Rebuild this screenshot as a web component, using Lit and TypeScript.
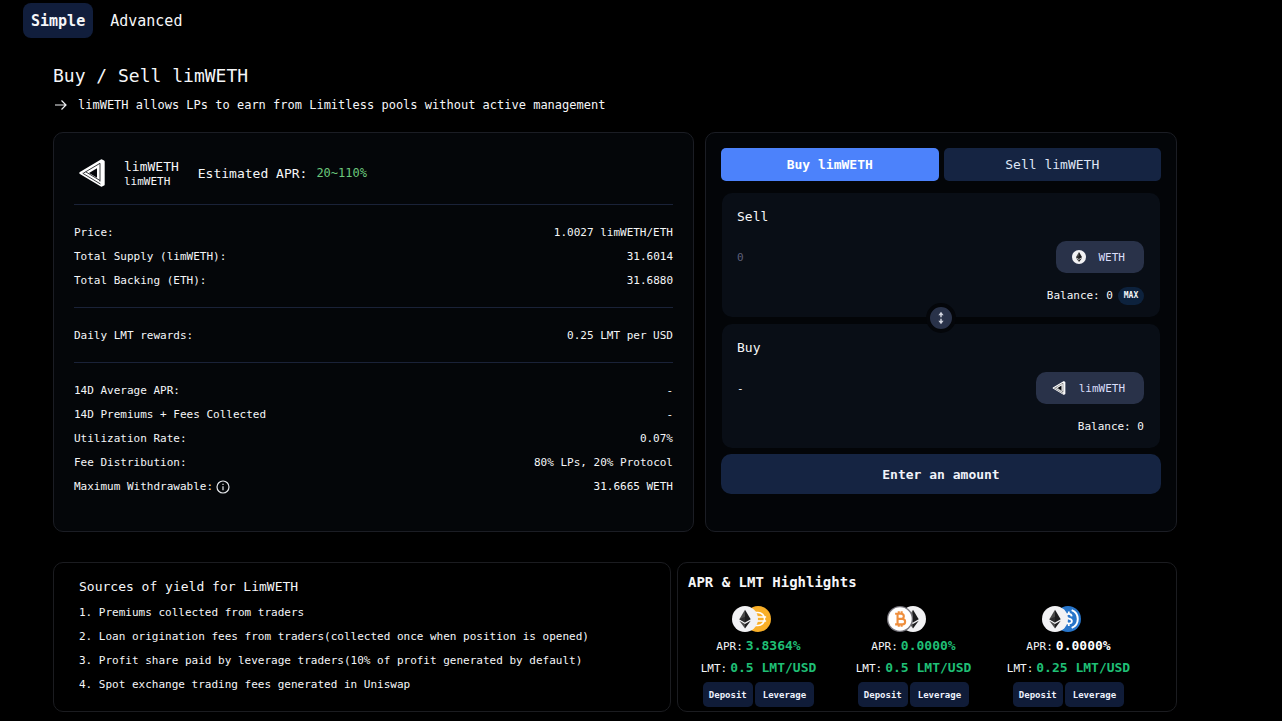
import { LitElement, html, svg, css, nothing } from "lit";
import { customElement, property, state } from "lit/decorators.js";
import { classMap } from "lit/directives/class-map.js";

const limitlessLogo = svg`
  <svg class="glyph" viewBox="0 0 26 28" aria-hidden="true">
    <path d="M1.500 14 22.500 1.500 24.500 2.500V25.500L22.500 26.500Z" fill="#fff" stroke="#fff" stroke-width="2.400" stroke-linejoin="round"/>
    <path d="M10 14 18 9.200v9.600Z" fill="#05070b"/>
    <path d="M21 22.500V4.300L4.300 14.200M6.800 12.900 21 21.500M3.600 14.200 21.500 25" fill="none" stroke="#05070b" stroke-width=".8"/>
  </svg>`;

const tokenArt: Record<string, unknown> = {
  eth: svg`
    <circle cx="16" cy="16" r="16" fill="#f2f2f4"/>
    <path d="M16 4.500 9 16.300l7 4.100Z" fill="#4a4a4a"/>
    <path d="M16 4.500 23 16.300l-7 4.100Z" fill="#1d1d1f"/>
    <path d="M9 16.300 16 13.100v7.300Z" fill="#2c2c2e"/>
    <path d="M9 18 16 27.600v-5.400Z" fill="#4a4a4a"/>
    <path d="M23 18 16 27.600v-5.400Z" fill="#1d1d1f"/>`,
  dai: svg`
    <circle cx="16" cy="16" r="16" fill="#f9af28"/>
    <path d="M10 8h6a8 8 0 0 1 0 16h-6ZM7 13.500h19M7 18.500h19" fill="none" stroke="#fff" stroke-width="2"/>`,
  btc: svg`
    <circle cx="16" cy="16" r="16" fill="#77757d"/>
    <circle cx="16" cy="16" r="14.400" fill="#fff"/>
    <path d="M10 9.500h7.500a3.200 3.200 0 0 1 0 6.400H12.500M12.500 16h6.500a3.300 3.300 0 0 1 0 6.600H10M13 10v12M14.500 6.500v3M18 6.500v3M14.500 22.500v3M18 22.500v3" fill="none" stroke="#ef8e3c" stroke-width="2.600"/>`,
  usdc: svg`
    <circle cx="16" cy="16" r="16" fill="#2775ca"/>
    <path d="M20.500 5a11.800 11.800 0 0 1 0 22M11.500 5a11.800 11.800 0 0 0 0 22" fill="none" stroke="#fff" stroke-width="2.400"/>
    <path d="M20.600 12.700c-.3-2-1.700-3-3.600-3-2.200 0-3.600 1.200-3.600 2.900 0 4 7.400 2 7.400 6 0 1.900-1.500 3-3.700 3-2.300 0-3.900-1.100-4.100-3.200M17 6.800v3M17 21.600v3" fill="none" stroke="#fff" stroke-width="2.200"/>`,
};

const tokenIcon = (name: string) => svg`
  <svg class="token" viewBox="0 0 32 32" aria-hidden="true">${tokenArt[name]}</svg>`;

interface Row {
  label: string;
  value: string;
  info?: boolean;
}

interface Pool {
  pair: [string, string];
  apr: string;
  lmt: string;
  plain?: boolean;
}

const base = css`
  *,
  *::before,
  *::after {
    box-sizing: border-box;
  }
  button,
  input {
    font: inherit;
    color: inherit;
    border: 0;
    padding: 0;
    margin: 0;
    background: none;
  }
  button {
    cursor: pointer;
  }
  h1,
  h2,
  h3,
  p,
  dl,
  dd,
  ol {
    margin: 0;
    padding: 0;
    font-weight: 400;
  }
  svg {
    display: block;
  }
`;

@customElement("vault-stats")
export class VaultStats extends LitElement {
  private groups: Row[][] = [
    [
      { label: "Price:", value: "1.0027 limWETH/ETH" },
      { label: "Total Supply (limWETH):", value: "31.6014" },
      { label: "Total Backing (ETH):", value: "31.6880" },
    ],
    [{ label: "Daily LMT rewards:", value: "0.25 LMT per USD" }],
    [
      { label: "14D Average APR:", value: "-" },
      { label: "14D Premiums + Fees Collected", value: "-" },
      { label: "Utilization Rate:", value: "0.07%" },
      { label: "Fee Distribution:", value: "80% LPs, 20% Protocol" },
      { label: "Maximum Withdrawable:", value: "31.6665 WETH", info: true },
    ],
  ];

  static styles = [
    base,
    css`
      :host {
        display: block;
        padding: 9px 20px 32px;
        background: #040609;
        border: 1px solid #1b1d24;
        border-radius: 10px;
      }
      .head {
        display: flex;
        align-items: center;
        height: 62px;
        padding-left: 5px;
      }
      .glyph {
        width: 26px;
        height: 28px;
      }
      .names {
        margin-left: 19px;
        padding-top: 2px;
        line-height: 15px;
      }
      .name {
        font-size: 13px;
      }
      .symbol {
        font-size: 11px;
      }
      .apr {
        margin-left: 19px;
        font-size: 13px;
      }
      .rate {
        margin-left: 9px;
        font-size: 12px;
        color: #6bc77c;
      }
      .group {
        padding: 16px 0 14px;
        border-top: 1px solid #1a2238;
        font-size: 11px;
        line-height: 24px;
      }
      .group:last-child {
        padding-bottom: 0;
      }
      .row {
        display: flex;
        justify-content: space-between;
      }
      .label {
        display: flex;
        align-items: center;
        gap: 3px;
      }
      .info {
        width: 14px;
        height: 14px;
      }
    `,
  ];

  render() {
    return html`
      <div class="head">
        ${limitlessLogo}
        <div class="names">
          <h2 class="name">limWETH</h2>
          <p class="symbol">limWETH</p>
        </div>
        <p class="apr">Estimated APR:</p>
        <p class="rate">20~110%</p>
      </div>
      ${this.groups.map(
        (rows) => html`<dl class="group">
          ${rows.map(
            (row) => html`<div class="row">
              <dt class="label">
                ${row.label}
                ${row.info
                  ? html`<svg class="info" viewBox="0 0 14 14" fill="none" stroke="#e4e6ea" stroke-width="1.2" aria-hidden="true">
                      <circle cx="7" cy="7" r="6" />
                      <path d="M7 6.300v4M7 3.700v1.300" />
                    </svg>`
                  : nothing}
              </dt>
              <dd>${row.value}</dd>
            </div>`
          )}
        </dl>`
      )}
    `;
  }
}

@customElement("trade-box")
export class TradeBox extends LitElement {
  @state() private side = "Buy";

  static styles = [
    base,
    css`
      :host {
        display: block;
        padding: 15px;
        background: #030508;
        border: 1px solid #1b1d24;
        border-radius: 10px;
      }
      .sides {
        display: grid;
        grid-template-columns: 1fr 1fr;
        gap: 5px;
        margin-bottom: 12px;
      }
      .side {
        height: 33px;
        border-radius: 5px;
        background: #152442;
        color: #dfe6f6;
        font-size: 13px;
      }
      .side.active {
        background: #4c82fb;
        color: #fff;
        font-weight: 700;
      }
      .fields {
        position: relative;
        display: grid;
        gap: 7px;
        margin: 0 1px 6px;
      }
      .field {
        padding: 12px 16px 12px 15px;
        border-radius: 10px;
        background: #090e16;
      }
      .title {
        display: block;
        line-height: 24px;
        font-size: 13px;
      }
      .entry {
        display: flex;
        justify-content: space-between;
        margin: 12px 0 14px;
        font-size: 11px;
      }
      .amount {
        flex: 1;
        min-width: 0;
        height: 32px;
        outline: none;
      }
      .amount::placeholder {
        color: #5d5f78;
        opacity: 1;
      }
      .pick {
        display: flex;
        align-items: center;
        gap: 13px;
        height: 32px;
        padding: 0 19px 0 16px;
        border-radius: 10px;
        background: #293249;
        color: #d9defa;
      }
      .token,
      .glyph {
        width: 14px;
        height: 14px;
      }
      .balance {
        display: flex;
        justify-content: flex-end;
        gap: 5px;
        font-size: 11px;
        line-height: 18px;
      }
      .max {
        width: 26px;
        border-radius: 9px;
        background: #0d223d;
        font-size: 8px;
        font-weight: 700;
      }
      .swap {
        position: absolute;
        top: 50%;
        left: 50%;
        display: grid;
        place-items: center;
        width: 30px;
        height: 30px;
        margin: -18px 0 0 -15px;
        border: 4px solid #04060a;
        border-radius: 50%;
        background: #293249;
      }
      .arrows {
        width: 8px;
        height: 14px;
      }
      .submit {
        display: block;
        width: 100%;
        height: 40px;
        border-radius: 10px;
        background: #152442;
        color: #f0f3fa;
        font-size: 13px;
        font-weight: 700;
      }
    `,
  ];

  render() {
    return html`
      <div class="sides">
        ${["Buy", "Sell"].map(
          (side) => html`<button
            class=${classMap({ side: true, active: this.side === side })}
            @click=${() => (this.side = side)}
          >${side} limWETH</button>`
        )}
      </div>
      <div class="fields">
        <div class="field">
          <label class="title" for="pay">Sell</label>
          <div class="entry">
            <input class="amount" id="pay" inputmode="decimal" placeholder="0" />
            <button class="pick">${tokenIcon("eth")}WETH</button>
          </div>
          <div class="balance">Balance: 0<button class="max">MAX</button></div>
        </div>
        <div class="field">
          <label class="title" for="receive">Buy</label>
          <div class="entry">
            <input class="amount" id="receive" readonly value="-" />
            <button class="pick">${limitlessLogo}limWETH</button>
          </div>
          <div class="balance">Balance: 0</div>
        </div>
        <button class="swap" aria-label="Swap direction">
          <svg class="arrows" viewBox="0 0 8 14" aria-hidden="true">
            <path d="M4 .8 6.600 4.300H1.400ZM4 13.200 6.600 9.700H1.400Z" fill="#d3d6e0" />
            <path d="M4 3v3.200M4 7.800V11" stroke="#d3d6e0" stroke-width="1.400" />
          </svg>
        </button>
      </div>
      <button class="submit">Enter an amount</button>
    `;
  }
}

@customElement("pool-highlight")
export class PoolHighlight extends LitElement {
  @property({ attribute: false }) pool!: Pool;

  static styles = [
    base,
    css`
      :host {
        display: flex;
        flex-direction: column;
        align-items: center;
      }
      .pair {
        display: flex;
        margin-bottom: 3px;
        padding-right: 14px;
      }
      .token {
        width: 26px;
        height: 26px;
      }
      .token:first-child {
        position: relative;
        z-index: 1;
        margin-right: -13px;
      }
      .stat {
        display: flex;
        align-items: baseline;
        gap: 3px;
        height: 22px;
        font-size: 11px;
        line-height: 22px;
      }
      .value {
        color: #1fbf75;
        font-size: 13px;
        font-weight: 700;
      }
      .value.plain {
        color: #fff;
      }
      .actions {
        display: flex;
        gap: 2px;
        margin-top: 3px;
      }
      .action {
        height: 25px;
        padding: 0 6px;
        border-radius: 5px;
        background: #101c38;
        color: #eef2fc;
        font-size: 9px;
        font-weight: 700;
      }
      .action.wide {
        padding: 0 8px;
      }
    `,
  ];

  render() {
    const { pair, apr, lmt, plain } = this.pool;
    return html`
      <div class="pair">${pair.map(tokenIcon)}</div>
      <p class="stat">APR:<span class=${classMap({ value: true, plain: !!plain })}>${apr}</span></p>
      <p class="stat">LMT:<span class="value">${lmt}</span></p>
      <div class="actions">
        <button class="action">Deposit</button>
        <button class="action wide">Leverage</button>
      </div>
    `;
  }
}

@customElement("app-root")
export class AppRoot extends LitElement {
  @state() private tab = "Simple";

  private sources = [
    "1. Premiums collected from traders",
    "2. Loan origination fees from traders(collected once when position is opened)",
    "3. Profit share paid by leverage traders(10% of profit generated by default)",
    "4. Spot exchange trading fees generated in Uniswap",
  ];

  private pools: Pool[] = [
    { pair: ["eth", "dai"], apr: "3.8364%", lmt: "0.5 LMT/USD" },
    { pair: ["btc", "eth"], apr: "0.0000%", lmt: "0.5 LMT/USD" },
    { pair: ["eth", "usdc"], apr: "0.0000%", lmt: "0.25 LMT/USD", plain: true },
  ];

  static styles = [
    base,
    css`
      :host {
        display: block;
        box-sizing: border-box;
        min-height: 100vh;
        background: #000;
        color: #f5f6f8;
        font-family: Consolas, "DejaVu Sans Mono", "Liberation Mono", monospace;
      }
      .tabs {
        display: flex;
        gap: 9px;
        padding: 3px 23px 0;
      }
      .tab {
        height: 35px;
        padding: 0 8px;
        border-radius: 8px;
        font-size: 15px;
      }
      .tab.active {
        background: #111e3c;
        font-weight: 700;
      }
      .page {
        padding: 26px 105px 9px 53px;
      }
      .heading {
        font-size: 18px;
        line-height: 24px;
      }
      .lead {
        display: flex;
        align-items: center;
        gap: 10px;
        margin: 7px 0 17px;
        font-size: 12px;
        line-height: 20px;
      }
      .arrow {
        width: 15px;
        height: 12px;
      }
      .main {
        display: grid;
        grid-template-columns: minmax(0, 641fr) minmax(0, 472fr);
        gap: 11px;
      }
      .extra {
        display: grid;
        grid-template-columns: minmax(0, 618fr) minmax(0, 500fr);
        gap: 6px;
        margin-top: 30px;
      }
      .card {
        border: 1px solid #1b1c20;
        border-radius: 10px;
      }
      .sources {
        padding: 12px 25px 13px;
        line-height: 24px;
      }
      .card-title {
        font-size: 13px;
        margin-bottom: 2px;
      }
      .list {
        list-style: none;
        font-size: 11px;
      }
      .highlights {
        padding: 7px 30px 4px 3px;
      }
      .bold-title {
        margin: 0 0 12px 7px;
        font-size: 14px;
        font-weight: 700;
        line-height: 24px;
      }
      .pools {
        display: grid;
        grid-template-columns: repeat(3, 1fr);
      }
    `,
  ];

  render() {
    return html`
      <nav class="tabs">
        ${["Simple", "Advanced"].map(
          (tab) => html`<button
            class=${classMap({ tab: true, active: this.tab === tab })}
            @click=${() => (this.tab = tab)}
          >${tab}</button>`
        )}
      </nav>
      <main class="page">
        <h1 class="heading">Buy / Sell limWETH</h1>
        <p class="lead">
          <svg class="arrow" viewBox="0 0 15 12" fill="none" stroke="#f0f1f4" stroke-width="1.200" aria-hidden="true">
            <path d="M2 6h11M8.500 1.500 13 6l-4.500 4.500" />
          </svg>
          limWETH allows LPs to earn from Limitless pools without active management
        </p>
        <div class="main">
          <vault-stats></vault-stats>
          <trade-box></trade-box>
        </div>
        <div class="extra">
          <section class="card sources">
            <h2 class="card-title">Sources of yield for LimWETH</h2>
            <ol class="list">
              ${this.sources.map((source) => html`<li>${source}</li>`)}
            </ol>
          </section>
          <section class="card highlights">
            <h2 class="bold-title">APR &amp; LMT Highlights</h2>
            <div class="pools">
              ${this.pools.map((pool) => html`<pool-highlight .pool=${pool}></pool-highlight>`)}
            </div>
          </section>
        </div>
      </main>
    `;
  }
}
